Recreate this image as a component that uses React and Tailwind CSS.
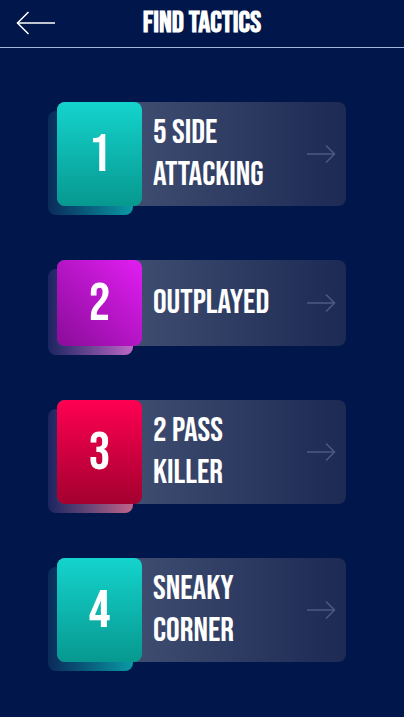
import React from 'react'

const font = { fontFamily: '"Bebas Neue", "Liberation Sans Narrow", "DejaVu Sans Condensed", "Roboto Condensed", "Liberation Sans", sans-serif' }

const tactics = [
  { n: '1', lines: ['5 Side', 'Attacking'], h: 'h-[104px]', front: 'bg-gradient-to-b from-[#14d4cd] to-[#07988f]', back: 'bg-gradient-to-r from-[#0a2a5a] to-[#0a9aa4]' },
  { n: '2', lines: ['Outplayed'], h: 'h-[86px]', front: 'bg-gradient-to-bl from-[#e21ef2] to-[#8a0c9a]', back: 'bg-gradient-to-r from-[#1a2460] to-[#c066c8]' },
  { n: '3', lines: ['2 Pass', 'Killer'], h: 'h-[104px]', front: 'bg-gradient-to-b from-[#ff0052] to-[#a3002f]', back: 'bg-gradient-to-r from-[#1a2460] to-[#c0648a]' },
  { n: '4', lines: ['Sneaky', 'Corner'], h: 'h-[104px]', front: 'bg-gradient-to-b from-[#14d4cd] to-[#07988f]', back: 'bg-gradient-to-r from-[#0a2a5a] to-[#0a9aa4]' },
]

const TacticCard = ({ t }) => (
  <div className={`relative ${t.h}`}>
    {/* shadow box */}
    <div className={`absolute -left-[9px] top-[9px] w-[85px] h-full rounded-lg ${t.back}`} />
    <div className="relative flex h-full rounded-lg bg-gradient-to-r from-[#4d5a7b] to-[#1c2a54]">
      <div className={`w-[85px] shrink-0 rounded-lg flex items-center justify-center text-white text-[54px] ${t.front}`}>
        {t.n}
      </div>
      <div className="flex-1 flex flex-col justify-center pl-[11px] text-white uppercase text-[34px] leading-[42px]">
        {t.lines.map((l) => (
          <span key={l}>{l}</span>
        ))}
      </div>
      <div className="flex items-center pr-[10px]">
        <svg width="30" height="20" viewBox="0 0 30 20" fill="none" stroke="#4b5b86" strokeWidth="1.5">
          <line x1="1" y1="10" x2="28" y2="10" />
          <polyline points="20,1.5 28.5,10 20,18.5" />
        </svg>
      </div>
    </div>
  </div>
)

export default function App() {
  return (
    <div className="w-[404px] min-h-[717px] bg-[#01164a]" style={font}>
      <div className="relative h-[48px] flex items-center justify-center border-b border-[#a3b6da]">
        <button className="absolute left-[16px] top-[11px]">
          <svg width="40" height="24" viewBox="0 0 40 24" fill="none" stroke="white" strokeWidth="1.5">
            <line x1="1" y1="12" x2="39" y2="12" />
            <polyline points="12.5,1 1.5,12 12.5,23" />
          </svg>
        </button>
        <h1 className="text-white font-bold text-[30px] uppercase">Find Tactics</h1>
      </div>
      <div className="pt-[54px] pl-[57px] pr-[58px] flex flex-col gap-[54px]">
        {tactics.map((t) => (
          <TacticCard key={t.n} t={t} />
        ))}
      </div>
    </div>
  )
}
